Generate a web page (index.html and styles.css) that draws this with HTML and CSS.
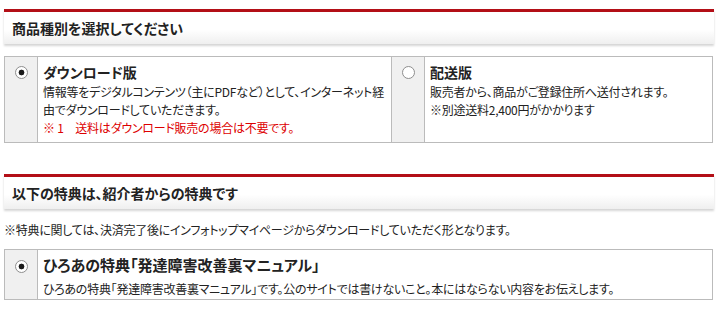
FILE: index.html
```html
<!DOCTYPE html>
<html lang="ja">
    <head>
        <meta charset="utf-8">
        <title>商品種別を選択</title>
        <link rel="stylesheet" href="styles.css">
    </head>
    <body>
        <div class="page">
            <h2 class="box-title">商品種別を選択してください</h2>

            <table class="choice">
                <tr>
                    <td class="choice-radio"><input type="radio" name="kind" id="kind-dl" checked></td>
                    <td class="choice-body choice-body-wide">
                        <label class="choice-name" for="kind-dl">ダウンロード版</label>
                        <p>情報等をデジタルコンテンツ（主にPDFなど）として、インターネット経由でダウンロードしていただきます。</p>
                        <p class="note-red">※ 1　送料はダウンロード販売の場合は不要です。</p>
                    </td>
                    <td class="choice-radio"><input type="radio" name="kind" id="kind-ship"></td>
                    <td class="choice-body">
                        <label class="choice-name" for="kind-ship">配送版</label>
                        <p>販売者から、商品がご登録住所へ送付されます。</p>
                        <p>※別途送料2,400円がかかります</p>
                    </td>
                </tr>
            </table>

            <h2 class="box-title box-title-second">以下の特典は、紹介者からの特典です</h2>

            <p class="bonus-note">※特典に関しては、決済完了後にインフォトップマイページからダウンロードしていただく形となります。</p>

            <table class="choice choice-bonus">
                <tr>
                    <td class="choice-radio"><input type="radio" name="bonus" id="bonus-1" checked></td>
                    <td class="choice-body">
                        <label class="choice-name choice-name-big" for="bonus-1">ひろあの特典「発達障害改善裏マニュアル」</label>
                        <p>ひろあの特典「発達障害改善裏マニュアル」です。公のサイトでは書けないこと。本にはならない内容をお伝えします。</p>
                    </td>
                </tr>
            </table>
        </div>
    </body>
</html>
```

FILE: styles.css
```css
body {
    margin: 0;
    background: #FFF;
    color: #222;
    font-family: "Noto Sans CJK JP", "Liberation Sans", sans-serif;
    font-size: 12px;
    font-feature-settings: "palt";
}

.page {
    width: 710px;
    padding: 9px 0 0 4px;
}

p {
    margin: 0;
    letter-spacing: -0.25px;
}

.box-title {
    margin: 0;
    height: 32px;
    line-height: 32px;
    padding-left: 8px;
    border-top: 3px solid #B30F17;
    background: linear-gradient(#FFF 55%, #EFEFEF);
    box-shadow: 0 2px 2px #D6D6D6;
    font-size: 14px;
    font-weight: bold;
}

.box-title-second {
    margin-top: 31px;
}

.choice {
    width: 709px;
    margin-top: 12px;
    border-collapse: collapse;
}

.choice td {
    border: 1px solid #BBB;
    vertical-align: top;
}

.choice-radio {
    width: 32px;
    padding: 9px 0 0;
    background: #F0F0F0;
    text-align: center;
}

.choice-radio input {
    -webkit-appearance: none;
    appearance: none;
    display: block;
    width: 13px;
    height: 13px;
    margin: 0 auto;
    border: 1px solid #8E8E8E;
    border-radius: 50%;
    background: #FFF;
    box-sizing: border-box;
}

.choice-radio input:checked {
    background: radial-gradient(circle, #1A1A1A 0, #1A1A1A 2.6px, #FFF 3.2px);
}

.choice-body {
    padding: 4px 5px 5px;
    line-height: 18px;
}

.choice-body-wide {
    width: 347px;
    padding-right: 1px;
}

.choice-name {
    display: block;
    height: 22px;
    line-height: 22px;
    font-size: 14px;
    font-weight: bold;
}

.note-red {
    color: #D00;
}

.bonus-note {
    margin-top: 12px;
    line-height: 18px;
}

.choice-bonus {
    margin-top: 10px;
}

.choice-bonus .choice-radio {
    padding-top: 10px;
}

.choice-bonus .choice-body {
    padding: 5px 5px 2px;
    line-height: 16px;
}

.choice-name-big {
    height: 20px;
    line-height: 20px;
    margin-bottom: 6px;
    font-size: 15px;
}
```
